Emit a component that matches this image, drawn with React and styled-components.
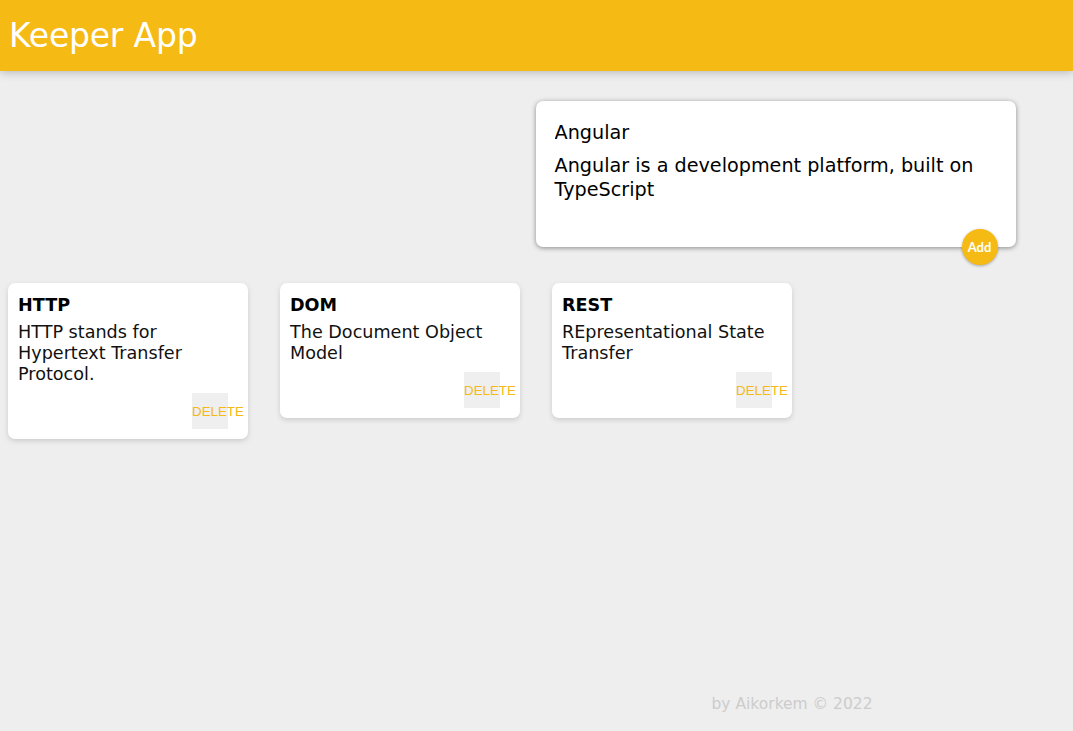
import React from 'react'
import styled, { createGlobalStyle } from 'styled-components'

const GlobalStyle = createGlobalStyle`
  html, body {
    margin: 0;
    padding: 0;
    background: #eee;
    font-family: "DejaVu Sans", "Noto Sans", sans-serif;
  }
`

const Page = styled.div`
  min-height: 100vh;
  display: flex;
  flex-direction: column;
`

const Header = styled.header`
  background-color: #f5ba13;
  height: 71px;
  display: flex;
  align-items: center;
  padding: 0 9px;
  box-shadow: 0 0 10px 0 rgba(0, 0, 0, 0.3);
`

const Title = styled.h1`
  margin: 0;
  color: #fff;
  font-family: "DejaVu Sans", sans-serif;
  font-weight: 400;
  font-size: 33px;
  letter-spacing: -0.2px;
`

const Main = styled.main`
  padding: 0 8px;
`

const CreateForm = styled.form`
  position: relative;
  width: 480px;
  box-sizing: border-box;
  margin: 30px 0 20px calc(50% - 1px);
  background: #fff;
  padding: 15px;
  border-radius: 7px;
  box-shadow: 0 1px 5px rgb(138, 137, 137);
`

const Field = styled.input`
  display: block;
  width: 100%;
  box-sizing: border-box;
  height: 32px;
  border: none;
  padding: 4px;
  outline: none;
  font-family: inherit;
  font-size: 19.2px;
  color: #000;
  background: transparent;
`

const Area = styled.textarea`
  display: block;
  width: 100%;
  box-sizing: border-box;
  height: 84px;
  border: none;
  padding: 6px 4px 2px;
  outline: none;
  font-family: inherit;
  font-size: 19.2px;
  line-height: 24px;
  color: #000;
  resize: none;
  background: transparent;
`

const AddButton = styled.button`
  position: absolute;
  right: 18px;
  bottom: -18px;
  width: 36px;
  height: 36px;
  padding: 0;
  border: none;
  border-radius: 50%;
  background: #f5ba13;
  color: #fff;
  font-family: "Lato", "Liberation Sans", sans-serif;
  font-weight: 700;
  font-size: 13px;
  box-shadow: 0 1px 3px rgba(0, 0, 0, 0.3);
`

const NotesRow = styled.div`
  display: flex;
  align-items: flex-start;
  gap: 32px;
  margin-top: 36px;
`

const Note = styled.div`
  width: 240px;
  box-sizing: border-box;
  background: #fff;
  border-radius: 7px;
  box-shadow: 0 2px 5px #ccc;
  padding: 12px 10px 10px;
  display: flex;
  flex-direction: column;
`

const NoteTitle = styled.h1`
  margin: 0 0 6px;
  font-size: 17.6px;
  line-height: 21px;
  font-weight: 600;
  color: #000;
`

const NoteText = styled.p`
  margin: 0 0 8px;
  font-size: 17.6px;
  line-height: 21px;
  color: #111;
  white-space: pre-wrap;
  word-wrap: break-word;
`

const DeleteButton = styled.button`
  align-self: flex-end;
  margin-right: 10px;
  width: 36px;
  height: 36px;
  padding: 0;
  border: none;
  background: #efefef;
  color: #f5ba13;
  font-family: "Liberation Sans", Arial, sans-serif;
  font-size: 13.33px;
  display: flex;
  align-items: center;
  justify-content: flex-start;
  white-space: nowrap;
  overflow: visible;
`

const Footer = styled.footer`
  margin-top: auto;
  height: 37px;
  display: flex;
  align-items: flex-start;
  padding-left: 536px;
`

const FooterText = styled.p`
  margin: 0;
  width: 512px;
  text-align: center;
  color: #ccc;
  font-size: 15.5px;
  line-height: 20px;
`

const notes = [
  { title: 'HTTP', content: 'HTTP stands for Hypertext Transfer Protocol.' },
  { title: 'DOM', content: 'The Document Object Model' },
  { title: 'REST', content: 'REpresentational State Transfer' }
]

export default function App () {
  return <Page>
    <GlobalStyle />
    <Header>
      <Title>Keeper App</Title>
    </Header>
    <Main>
      <CreateForm onSubmit={e => e.preventDefault()}>
        <Field name='title' defaultValue='Angular' placeholder='Title' />
        <Area name='content' rows={3} defaultValue='Angular is a development platform, built on TypeScript' placeholder='Take a note...' />
        <AddButton>Add</AddButton>
      </CreateForm>
      <NotesRow>
        {notes.map(note => <Note key={note.title}>
          <NoteTitle>{note.title}</NoteTitle>
          <NoteText>{note.content}</NoteText>
          <DeleteButton>DELETE</DeleteButton>
        </Note>)}
      </NotesRow>
    </Main>
    <Footer>
      <FooterText>by Aikorkem © 2022</FooterText>
    </Footer>
  </Page>
}
